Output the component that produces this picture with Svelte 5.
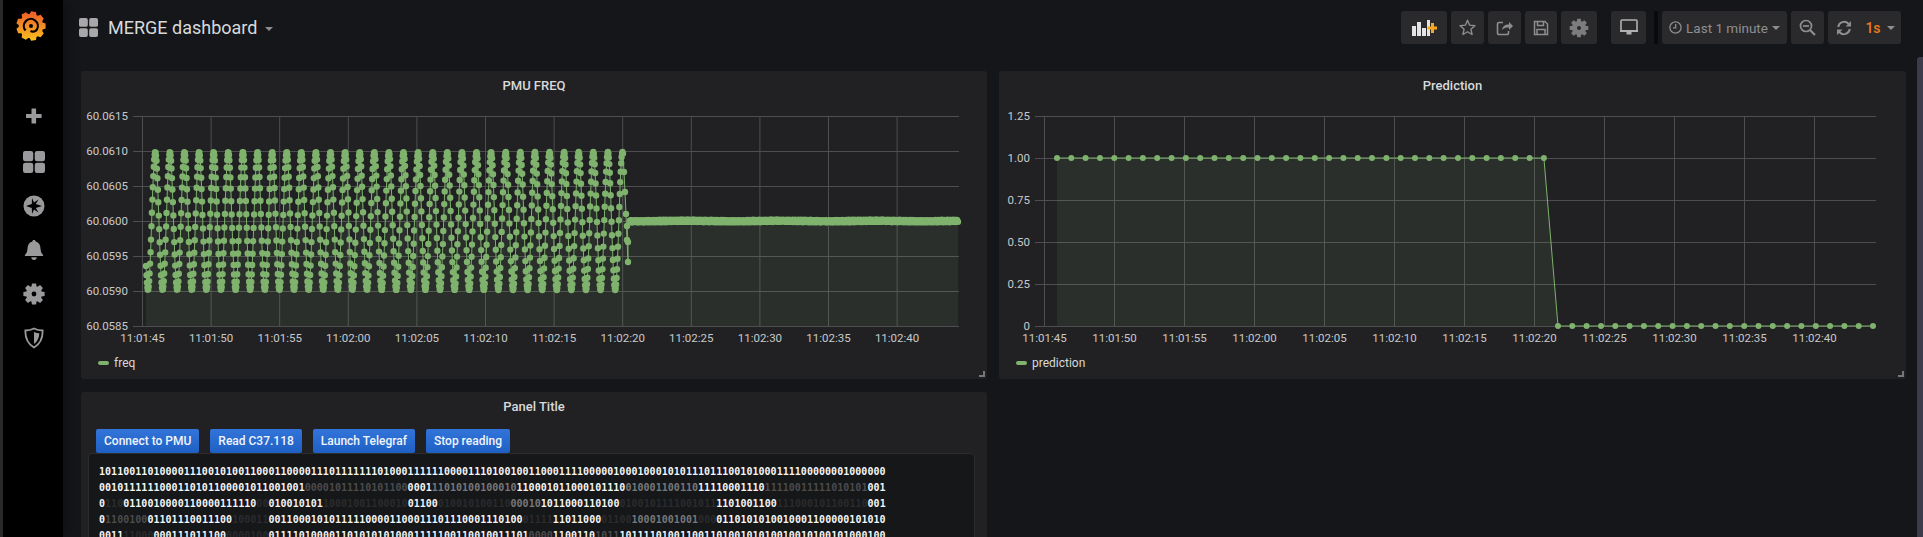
<script>
  // freq series: a sine sampled densely, then a step down to a noisy flat line
  const GREEN = '#7eb26d';
  const freqPts = [];
  for (let x = 146; x < 623; x += 0.456) {
    freqPts.push([x, 221 + 69 * Math.cos((2 * Math.PI * (x - 148)) / 14.6)]);
  }
  freqPts.push([624, 172], [625, 192], [626, 214], [627, 240], [628, 262], [628, 242], [627, 226]);
  for (let x = 630; x <= 958; x += 0.5) {
    freqPts.push([x, 221 + Math.sin(x * 7.3) * 1 + Math.sin(x * 2.1) * 0.5]);
  }
  const freqLine = freqPts.map((p) => p[0].toFixed(1) + ' ' + p[1].toFixed(1)).join(' L');
  const freqArea = `M146 326 L${freqLine} L958 326 Z`;
  const freqDots = freqPts.map((p) => `M${p[0].toFixed(1)} ${p[1].toFixed(1)}h0`).join('');

  const predPts = [];
  for (let i = 0; i < 35; i++) predPts.push([1057 + i * 14.32, 158]);
  for (let i = 0; i < 23; i++) predPts.push([1558 + i * 14.32, 326]);
  const predLine = predPts.map((p) => p[0].toFixed(1) + ' ' + p[1]).join(' L');
  const predArea = `M1057 326 L${predLine} Z`;

  const freqTicksY = [
    [116, '60.0615'], [151, '60.0610'], [186, '60.0605'], [221, '60.0600'],
    [256, '60.0595'], [291, '60.0590'], [326, '60.0585']
  ];
  const predTicksY = [[116, '1.25'], [158, '1.00'], [200, '0.75'], [242, '0.50'], [284, '0.25'], [326, '0']];
  const timeLabels = [
    '11:01:45', '11:01:50', '11:01:55', '11:02:00', '11:02:05', '11:02:10',
    '11:02:15', '11:02:20', '11:02:25', '11:02:30', '11:02:35', '11:02:40'
  ];
  const freqTicksX = timeLabels.map((t, i) => [142 + i * 68.6, t]);
  const predTicksX = timeLabels.map((t, i) => [1044 + i * 70, t]);

  const charts = [
    { title: 'PMU FREQ', legend: 'freq', view: '81 101 906 247', left: 133, right: 959, ticksY: freqTicksY, ticksX: freqTicksX, labelX: 128, line: freqLine, area: freqArea, dots: freqDots, r: 6.4 },
    { title: 'Prediction', legend: 'prediction', view: '999 101 907 247', left: 1035, right: 1876, ticksY: predTicksY, ticksX: predTicksX, labelX: 1030, line: predLine, area: predArea, dots: predPts.map((p) => `M${p[0].toFixed(1)} ${p[1]}h0`).join(''), r: 6 }
  ];

  function gear(cx, cy, outer, inner, teeth) {
    const pts = [];
    const step = (Math.PI * 2) / teeth;
    for (let i = 0; i < teeth; i++) {
      const a = i * step;
      [[-0.3, inner], [-0.17, outer], [0.17, outer], [0.3, inner]].forEach(([o, r]) => {
        pts.push((cx + r * Math.cos(a + o * step * 1.4)).toFixed(2) + ',' + (cy + r * Math.sin(a + o * step * 1.4)).toFixed(2));
      });
    }
    return pts.join(' ');
  }

  const terminal = [
    { bits: '1011001101 0000111001 0100110001 1000011101 1111110100 0111111000 0111010010 0110001111 0000010001 0001010111 0111001010 0011110000 0001000000', stops: [[885, 'b']] },
    { bits: '0010111111 0001101011 0000101100 1001000010 1111010110 0000111010 1001000101 1000101100 0101110010 0011001101 1110001110 1111001111 1010101001', stops: [[307, 'b'], [408, 'd'], [432, 'b'], [515, 'c'], [625, 'b'], [695, 'c'], [765, 'b'], [867, 'd'], [885, 'b']] },
    { bits: '0110011001 0000110000 1111100001 0010101100 0100110001 0011000100 1010011000 0101011000 1101000100 1011110010 1111010011 0011100010 1100110001', stops: [[106, 'b'], [124, 'e'], [256, 'b'], [268, 'e'], [322, 'b'], [408, 'e'], [438, 'b'], [510, 'e'], [540, 'c'], [618, 'b'], [717, 'e'], [777, 'b'], [867, 'e'], [885, 'b']] },
    { bits: '0110010001 1011100111 0010001100 1100010101 1111000011 0001110111 0001110100 0111111011 0000110010 0010010010 0001101010 1001000110 0000101010', stops: [[106, 'b'], [147, 'd'], [235, 'b'], [268, 'e'], [520, 'b'], [552, 'e'], [600, 'b'], [632, 'e'], [697, 'c'], [715, 'e'], [885, 'b']] },
    { bits: '0011110000 0011101110 0000010001 1110100001 1010101010 0011111001 1001001110 1000011001 1010111011 1101001100 1101001010 1001001010 0101000100', stops: [[122, 'b'], [153, 'e'], [227, 'b'], [268, 'e'], [528, 'b'], [552, 'd'], [597, 'b'], [617, 'd'], [885, 'b']] }
  ].map((row) => {
    // stops are pixel positions in the shot, 6.05px per char from x=99
    const bits = row.bits.replace(/ /g, '');
    let from = 0;
    return row.stops.map(([x, cls]) => {
      const to = Math.round((x - 99) / 6.05);
      const text = bits.slice(from, to);
      from = to;
      return { text, cls };
    });
  });

  const actions = ['Connect to PMU', 'Read C37.118', 'Launch Telegraf', 'Stop reading'];
</script>

{#snippet gridIcon(size)}
  <svg width={size} height={size} viewBox="0 0 20 20" fill="currentColor">
    <rect x="0" y="0" width="9.3" height="9.3" rx="2" />
    <rect x="10.7" y="0" width="9.3" height="9.3" rx="2" />
    <rect x="0" y="10.7" width="9.3" height="9.3" rx="2" />
    <rect x="10.7" y="10.7" width="9.3" height="9.3" rx="2" />
  </svg>
{/snippet}

<div class="app">
  <nav class="rail">
    <svg class="logo" width="30" height="32" viewBox="0 0 30 32">
      <defs>
        <linearGradient id="logo-fill" x1="0" y1="0" x2="0" y2="1">
          <stop offset="0" stop-color="#ea5a28" />
          <stop offset="1" stop-color="#fbc020" />
        </linearGradient>
      </defs>
      <polygon points={gear(15, 16, 14.8, 12.2, 9)} fill="url(#logo-fill)" />
      <path d="M9.500 20.500a7 7 0 1 1 11.500 -1.200a5 5 0 0 1 -6.500 1.700" fill="none" stroke="#000" stroke-width="2.200" />
      <circle cx="15" cy="16" r="2" fill="#000" />
    </svg>
    <div class="rail-icons">
      <svg class="plus" width="18" height="18" viewBox="0 0 18 18" fill="currentColor"><path d="M7 1.500h3.600a.5.5 0 0 1 .5.5v5h5a.5.5 0 0 1 .5.5v3a.5.5 0 0 1-.5.5h-5v5a.5.5 0 0 1-.5.5H7a.5.5 0 0 1-.5-.5v-5h-5a.5.5 0 0 1-.5-.5v-3a.5.5 0 0 1 .5-.5h5V2a.5.5 0 0 1 .5-.5z" /></svg>
      {@render gridIcon(22)}
      <svg width="22" height="22" viewBox="0 0 22 22"><circle cx="11" cy="11" r="10.500" fill="currentColor" /><polygon points="15.500,4.500 12.800,9 19,11 12.800,13 15.500,17.500 11,14.500 9,19 8.800,13 3,11 8.800,9 9,3 11,7.500" fill="#000" /></svg>
      <svg width="20" height="22" viewBox="0 0 20 22" fill="currentColor"><path d="M10 1c1 0 1.600.6 1.700 1.500C15 3.300 16.300 6 16.500 9.500c.2 3 .8 4.700 2.500 6.200.5.6.2 1.300-.6 1.300H1.600c-.8 0-1.100-.7-.6-1.300 1.700-1.500 2.300-3.200 2.500-6.200C3.700 6 5 3.300 8.300 2.500 8.400 1.600 9 1 10 1z" /><path d="M7.300 18.300h5.400A2.800 2.800 0 0 1 10 21a2.800 2.800 0 0 1-2.700-2.700z" /></svg>
      <svg width="22" height="22" viewBox="0 0 22 22"><polygon points={gear(11, 11, 10.800, 8, 8)} fill="currentColor" /><circle cx="11" cy="11" r="2.400" fill="#000" /></svg>
      <svg width="20" height="22" viewBox="0 0 20 22"><path d="M10 1.500c2.800 1.400 5.500 2 8.600 2 .3 7-2 13-8.600 17-6.600-4-8.900-10-8.600-17 3.100 0 5.800-.6 8.600-2z" fill="none" stroke="currentColor" stroke-width="1.800" /><path d="M10 5c1.900.8 3.500 1.200 5.300 1.300-.1 4.500-1.700 8.200-5.300 10.800z" fill="currentColor" /></svg>
    </div>
  </nav>

  <main class="main">
    <header class="topbar">
      <div class="crumb">
        <span class="crumb-icon">{@render gridIcon(19)}</span>
        <span class="crumb-title">MERGE dashboard</span>
        <span class="caret crumb-caret"></span>
      </div>
      <div class="tools">
        <button class="tool w-add" aria-label="Add panel">
          <svg width="26" height="18" viewBox="0 0 26 18"><g fill="#e3e3e3"><rect x="1" y="7" width="4" height="10" /><rect x="6" y="3" width="4" height="14" /><rect x="11" y="9" width="4" height="8" /><rect x="16" y="1" width="3" height="16" /></g><path d="M20 4h3v3.500h3v3h-3V14h-3v-3.500h-3.500v-3H20z" fill="#f5a623" /></svg>
        </button>
        <button class="tool w-33" aria-label="Star">
          <svg width="17" height="17" viewBox="0 0 16 16"><polygon points="8,1.200 10,5.800 15,6.300 11.200,9.600 12.300,14.600 8,12 3.700,14.600 4.800,9.600 1,6.300 6,5.800" fill="none" stroke="#8e8e90" stroke-width="1.300" stroke-linejoin="round" /></svg>
        </button>
        <button class="tool w-33" aria-label="Share">
          <svg width="18" height="18" viewBox="0 0 18 18" fill="none" stroke="#8e8e90" stroke-width="1.600"><path d="M7 3.500H3a1.500 1.500 0 0 0-1.500 1.500v9A1.500 1.500 0 0 0 3 15.500h8a1.500 1.500 0 0 0 1.500-1.500v-2" /><path d="M6 11c.3-3.500 3-5.500 7-5.500V3l4 4-4 4V8.500c-3 0-5.500.5-7 2.500z" fill="#8e8e90" stroke="none" /></svg>
        </button>
        <button class="tool w-32" aria-label="Save">
          <svg width="16" height="16" viewBox="0 0 16 16" fill="none" stroke="#8e8e90" stroke-width="1.500"><path d="M1.500 1.500h10.500l2.500 2.500v10.500h-13z" /><path d="M4.500 1.500v4h6v-4M4 14.500v-5h8v5" /></svg>
        </button>
        <button class="tool w-36" aria-label="Settings">
          <svg width="20" height="20" viewBox="0 0 20 20"><polygon points={gear(10, 10, 9.500, 7, 8)} fill="#7c7c7e" /><circle cx="10" cy="10" r="2" fill="#2a2a2d" /></svg>
        </button>
        <button class="tool w-35 group-gap" aria-label="Cycle view mode">
          <svg width="18" height="17" viewBox="0 0 18 17" fill="none"><rect x="1" y="1" width="16" height="11" rx="1" stroke="#b0b0b2" stroke-width="1.600" /><path d="M0 11h18v2H0zM6.500 13h5v2.500h-5z" fill="#b0b0b2" /></svg>
        </button>
        <div class="divider"></div>
        <button class="tool w-time">
          <svg width="13" height="13" viewBox="0 0 13 13" fill="none" stroke="#8e8e90" stroke-width="1.300"><circle cx="6.500" cy="6.500" r="5.600" /><path d="M6.700 3v3.800H4" /></svg>
          <span>Last 1 minute</span>
          <span class="caret"></span>
        </button>
        <button class="tool w-33" aria-label="Zoom out">
          <svg width="17" height="17" viewBox="0 0 17 17" fill="none" stroke="#8e8e90" stroke-width="1.700"><circle cx="7" cy="7" r="5.500" /><path d="M11 11l5 5" stroke-width="2.200" /><path d="M4 7h6" /></svg>
        </button>
        <div class="joined">
          <button class="tool w-31" aria-label="Refresh">
            <svg width="16" height="16" viewBox="0 0 16 16" fill="none" stroke="#8e8e90" stroke-width="2"><path d="M2.200 7a6 6 0 0 1 10.300-3.300L14 5.500" /><path d="M13.800 9a6 6 0 0 1-10.300 3.300L2 10.500" /><path d="M15 1v5.500H9.500zM1 15V9.500h5.500z" fill="#8e8e90" stroke="none" /></svg>
          </button>
          <button class="tool w-42 interval"><span>1s</span><span class="caret"></span></button>
        </div>
      </div>
    </header>

    <div class="panels">
      {#each charts as c}
        <section class="panel">
          <h2 class="panel-title">{c.title}</h2>
          <svg class="plot" viewBox={c.view}>
            {#each c.ticksY as [y, label]}
              <line x1={c.left} x2={c.right} y1={y + 0.5} y2={y + 0.5} class="grid" />
              <text x={c.labelX} y={y + 4} text-anchor="end" class="tick">{label}</text>
            {/each}
            {#each c.ticksX as [x, label]}
              <line x1={x + 0.5} x2={x + 0.5} y1="116" y2="326" class="grid" />
              <text x={x + 0.5} y="342" text-anchor="middle" class="tick">{label}</text>
            {/each}
            <path d={c.area} fill={GREEN} fill-opacity="0.1" />
            <path d={'M' + c.line} fill="none" stroke={GREEN} stroke-width="1" />
            <path d={c.dots} fill="none" stroke={GREEN} stroke-width={c.r} stroke-linecap="round" />
          </svg>
          <div class="legend"><span class="legend-key"></span>{c.legend}</div>
          <span class="resize"></span>
        </section>
      {/each}

      <section class="panel text-panel">
        <h2 class="panel-title">Panel Title</h2>
        <div class="actions">
          {#each actions as a}
            <button class="btn">{a}</button>
          {/each}
        </div>
        <pre class="terminal">{#each terminal as row}<div>{#each row as seg}<span class={seg.cls}>{seg.text}</span>{/each}</div>{/each}</pre>
      </section>
    </div>
  </main>

  <div class="scrollbar"></div>
</div>

<style>
  :global(body) {
    margin: 0;
    background: #141619;
    overflow: hidden;
  }

  .app {
    display: flex;
    height: 537px;
    overflow: hidden;
    position: relative;
    font-family: Roboto, "Liberation Sans", sans-serif;
    color: #d8d9da;
  }

  .rail {
    width: 60px;
    flex-shrink: 0;
    background: #000;
    border-left: 3px solid #29292b;
    display: flex;
    flex-direction: column;
    align-items: center;
    color: #9a9a9c;
    box-shadow: 6px 0 10px rgba(0, 0, 0, 0.25);
  }

  .logo {
    margin-top: 10px;
    margin-left: -4px;
  }

  .rail-icons {
    margin-top: 65px;
    display: flex;
    flex-direction: column;
    align-items: center;
    gap: 22px;
    margin-left: 2px;
  }

  .plus {
    margin-bottom: 4px;
  }

  .main {
    flex: 1;
    min-width: 0;
    padding: 0 17px 0 18px;
  }

  .topbar {
    height: 71px;
    display: flex;
    justify-content: space-between;
    align-items: flex-start;
  }

  .crumb {
    display: flex;
    align-items: center;
    height: 54px;
    margin-left: -2px;
    color: #a8a8aa;
  }

  .crumb-title {
    margin-left: 10px;
    font-size: 18px;
    color: #d8d9da;
  }

  .crumb-icon {
    display: flex;
  }

  .crumb-caret {
    margin: 4px 0 0 8px;
    color: #b7b7b9;
  }

  .tools {
    display: flex;
    gap: 4px;
    margin: 11px 5px 0 0;
  }

  .tool {
    height: 33px;
    padding: 0;
    border: none;
    border-radius: 3px;
    background: #2a2a2d;
    display: flex;
    align-items: center;
    justify-content: center;
    gap: 4px;
    color: #8e8e90;
    font-family: inherit;
    font-size: 13.5px;
  }

  .w-add { width: 46px; }
  .w-31 { width: 31px; border-radius: 3px 0 0 3px; }
  .w-32 { width: 32px; }
  .w-33 { width: 33px; }
  .w-35 { width: 35px; }
  .w-36 { width: 36px; }
  .w-42 { width: 42px; border-radius: 0 3px 3px 0; }
  .w-time { width: 125px; }

  .group-gap { margin-left: 10px; }

  .divider {
    width: 4px;
    margin-left: 4px;
    background: #0a0a0c;
  }

  .joined { display: flex; }

  .interval {
    color: #eb7b18;
    font-weight: 500;
    font-size: 14px;
    gap: 6px;
  }

  .caret {
    display: inline-block;
    width: 0;
    height: 0;
    border-left: 4px solid transparent;
    border-right: 4px solid transparent;
    border-top: 4px solid #8e8e90;
  }

  .panels {
    display: grid;
    grid-template-columns: 906px 907px;
    gap: 13px 12px;
  }

  .panel {
    background: #212124;
    border-radius: 3px;
    height: 308px;
    position: relative;
  }

  .panel-title {
    margin: 0;
    height: 30px;
    line-height: 30px;
    text-align: center;
    font-size: 13px;
    font-weight: 500;
    color: #d8d9da;
  }

  .plot {
    display: block;
    width: 100%;
    height: 247px;
  }

  .grid {
    stroke: #4e4e50;
    stroke-width: 1;
  }

  .tick {
    font-size: 11.5px;
    fill: #c8c9ca;
  }

  .legend {
    display: flex;
    align-items: center;
    gap: 5px;
    padding: 5px 0 0 17px;
    font-size: 12px;
    line-height: 20px;
  }

  .legend-key {
    width: 11px;
    height: 4px;
    border-radius: 2px;
    background: #7eb26d;
  }

  .resize {
    position: absolute;
    right: 2px;
    bottom: 2px;
    width: 4px;
    height: 4px;
    border-right: 2px solid #77777a;
    border-bottom: 2px solid #77777a;
  }

  .text-panel {
    height: 160px;
  }

  .actions {
    display: flex;
    gap: 11px;
    padding: 7px 0 0 15px;
  }

  .btn {
    height: 24px;
    padding: 0 8px;
    border: none;
    border-radius: 2px;
    background: linear-gradient(#3274d9, #1f60c4);
    color: #f0f4fb;
    font-family: inherit;
    font-size: 12px;
    font-weight: 500;
    white-space: nowrap;
  }

  .terminal {
    margin: 0 12px 0 7px;
    padding: 10px 10px;
    background: #161719;
    border: 1px solid #2c2c2f;
    border-radius: 4px;
    font-family: "DejaVu Sans Mono", monospace;
    font-size: 10px;
    letter-spacing: 0.03px;
    font-weight: 700;
    line-height: 16px;
    height: 120px;
  }

  .b { color: #f4f5f5; }
  .c { color: #77787a; }
  .d { color: #4a4b4d; }
  .e { color: #2a2b2d; }

  .scrollbar {
    position: absolute;
    right: 0;
    top: 57px;
    bottom: 0;
    width: 6px;
    border-radius: 3px 0 0 0;
    background: #3b3b4c;
  }
</style>
